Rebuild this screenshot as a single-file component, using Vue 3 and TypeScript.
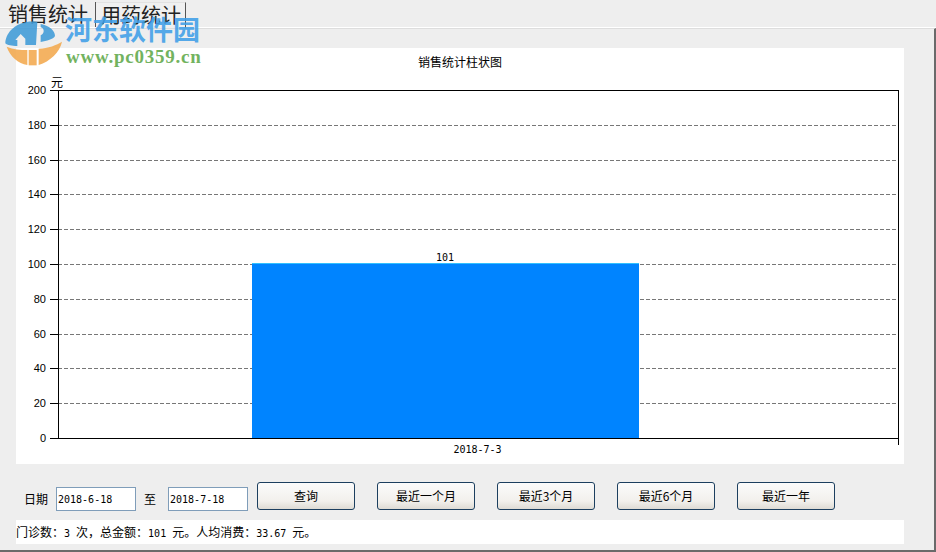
<script setup lang="ts">
const ticks = [200, 180, 160, 140, 120, 100, 80, 60, 40, 20, 0]
const top = 90
const bottom = 438
const yOf = (v: number) => Math.round(bottom - ((bottom - top) * v) / 200) + 0.5
const buttons = ['最近一个月', '最近3个月', '最近6个月', '最近一年']
</script>

<template>
  <div class="win">
    <div class="tabs">
      <span class="tab">销售统计</span>
      <span class="tab second">用药统计</span>
    </div>
    <div class="panel">
      <div class="chart">
        <svg class="plot" width="888" height="416" viewBox="16 48 888 416">
          <text x="460" y="67" text-anchor="middle" class="t">销售统计柱状图</text>
          <text x="51" y="87" class="t">元</text>
          <g v-for="v in ticks" :key="v">
            <line v-if="v !== 0 && v !== 200" x1="58" x2="898" :y1="yOf(v)" :y2="yOf(v)" class="grid" />
            <line x1="50" x2="58" :y1="yOf(v)" :y2="yOf(v)" class="axis" />
            <text x="46" :y="yOf(v) + 3.5" text-anchor="end" class="n">{{ v }}</text>
          </g>
          <rect x="252" y="263" width="387" height="175" fill="#0084ff" />
          <rect x="252" y="263" width="387" height="1" fill="#30c0ff" />
          <rect x="58.5" y="90.5" width="840" height="348" fill="none" stroke="#000" />
          <line x1="898.5" x2="898.5" y1="438" y2="445" class="axis" />
          <text x="445" y="261" text-anchor="middle" class="m">101</text>
          <text x="477.5" y="453" text-anchor="middle" class="m">2018-7-3</text>
        </svg>
      </div>
      <div class="controls">
        <span class="label">日期</span>
        <input class="date" value="2018-6-18" />
        <span class="label to">至</span>
        <input class="date" value="2018-7-18" />
        <button class="btn first">查询</button>
        <button v-for="b in buttons" :key="b" class="btn">{{ b }}</button>
      </div>
      <div class="status">门诊数：<span class="num">3 </span>次，<span class="num"> </span>总金额：<span class="num">101 </span>元。人均消费：<span class="num">33.67 </span>元。</div>
    </div>
    <div class="mark">
      <svg class="logo" width="70" height="60" viewBox="0 0 210 180">
        <path d="M16 100 C18 60 60 28 112 36 L108 105 L76 105 L76 86 L62 72 L46 90 L52 90 L52 108 C35 108 22 106 16 100 Z" fill="#3f9bd8" />
        <path d="M122 42 C150 48 165 62 165 78 C160 88 140 92 122 96 L122 76 C134 72 134 54 122 52 Z" fill="#3f9bd8" />
        <path d="M20 110 C40 118 60 120 82 120 L82 165 C55 160 30 140 20 110 Z" fill="#f3a94e" />
        <path d="M86 120 L110 120 L110 166 L86 166 Z" fill="#f3a94e" />
        <path d="M116 116 C145 115 170 105 186 95 C180 125 150 155 116 165 Z" fill="#f3a94e" />
      </svg>
      <div class="mark-cn">河东软件园</div>
      <div class="mark-en">www.pc0359.cn</div>
    </div>
  </div>
</template>

<style>
html, body { margin: 0; background: #efefef; }
</style>

<style scoped>
.win {
  position: relative;
  width: 936px;
  height: 552px;
  overflow: hidden;
  background: #eeeeee;
  font-family: "Noto Sans CJK SC", "Liberation Sans", sans-serif;
  color: #000;
}
.tabs {
  display: flex;
  height: 28px;
  box-sizing: border-box;
  padding-left: 8px;
  background: #eeeeee;
  border-bottom: 1px solid #fff;
}
.tab {
  font-size: 20px;
  height: 25px;
  margin-top: 2px;
  line-height: 24px;
  padding-right: 7px;
  border-right: 1px solid #555;
  color: #222;
}
.second {
  padding-left: 5px;
  padding-right: 4px;
  border-top: 1px solid #e2e2e2;
  background: #f0f0f0;
}
.panel {
  height: 524px;
  box-sizing: border-box;
  padding: 19px 30px 0 16px;
  border-top: 1px solid #dddddd;
  border-right: 2px solid #6a6a6a;
  border-bottom: 2px solid #6a6a6a;
}
.chart {
  height: 416px;
  background: #fff;
}
.plot { display: block; }
.t {
  font-size: 12px;
  font-family: "Noto Sans CJK SC", sans-serif;
}
.n {
  font-size: 11px;
  font-family: "Liberation Sans", sans-serif;
}
.m {
  font-size: 10px;
  font-family: "DejaVu Sans Mono", monospace;
}
.grid {
  stroke: #777;
  stroke-dasharray: 4 2;
}
.axis { stroke: #000; }
.controls {
  height: 56px;
  display: flex;
  align-items: flex-start;
  box-sizing: border-box;
  padding: 18px 0 0 8px;
  font-size: 12px;
}
.label { line-height: 34px; }
.to { margin: 0 12px 0 8px; }
.date {
  width: 80px;
  height: 24px;
  margin: 5px 0 0 8px;
  padding: 0 1px;
  box-sizing: border-box;
  border: 1px solid #7f9db9;
  background: #fff;
  font: 10px "DejaVu Sans Mono", monospace;
  color: #000;
  outline: none;
}
.to + .date { margin-left: 0; }
.btn {
  width: 98px;
  height: 28px;
  margin: 0 0 0 22px;
  padding: 0 0 2px;
  box-sizing: border-box;
  border: 1px solid #1c3f5f;
  border-radius: 3px;
  background: linear-gradient(#fbfbfb, #f2f0ec 70%, #dedbd4);
  font: 12px "Noto Sans CJK SC", sans-serif;
  color: #000;
}
.first { margin-left: 9px; }
.status {
  height: 24px;
  line-height: 24px;
  background: #fff;
  font-size: 12px;
  white-space: pre;
}
.num {
  font: 10px "DejaVu Sans Mono", monospace;
}
.mark {
  position: absolute;
  left: 0;
  top: 10px;
  width: 210px;
  height: 60px;
  opacity: 0.88;
}
.logo { position: absolute; left: 0; top: 0; }
.mark-cn {
  position: absolute;
  left: 65px;
  top: 4px;
  font: 700 27px/30px "Noto Sans CJK SC", sans-serif;
  color: #3f9fe8;
  white-space: nowrap;
}
.mark-en {
  position: absolute;
  left: 66px;
  top: 37px;
  font: 700 19px/20px "Liberation Serif", serif;
  letter-spacing: 0.77px;
  color: #5fa94a;
  white-space: nowrap;
}
</style>
